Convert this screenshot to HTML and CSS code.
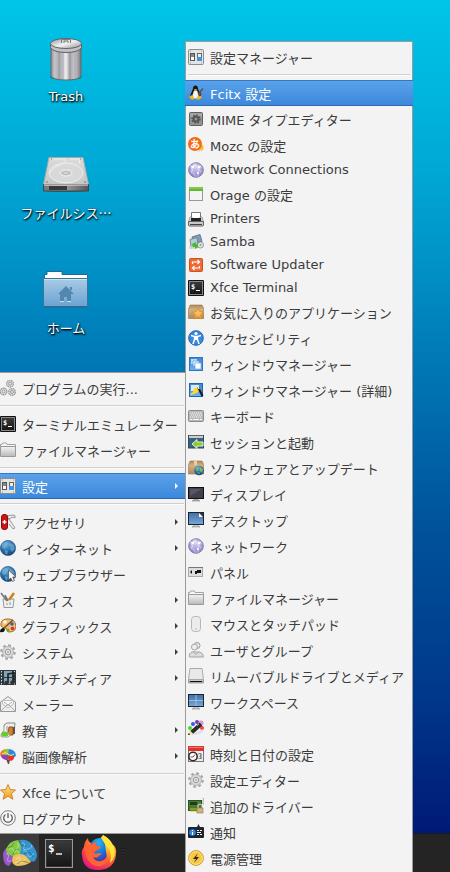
FILE: index.html
```html
<!DOCTYPE html>
<html lang="ja">
<head>
<meta charset="utf-8">
<meta name="viewport" content="width=device-width, initial-scale=1">
<title>デスクトップ</title>
<link rel="stylesheet" href="styles.css">
</head>
<body>
<svg class="sprite" aria-hidden="true">
  <defs>
    <linearGradient id="g-steel" x1="0" x2="1" y1="0" y2="0"><stop offset="0" stop-color="#8f8f96"/><stop offset=".12" stop-color="#c4c4c9"/><stop offset=".3" stop-color="#a8a8ae"/><stop offset=".5" stop-color="#f0f0f2"/><stop offset=".62" stop-color="#a6a6ac"/><stop offset=".8" stop-color="#c9c9ce"/><stop offset="1" stop-color="#77777e"/></linearGradient>
    <linearGradient id="g-lid" x1="0" x2="1" y1="0" y2="1"><stop offset="0" stop-color="#8f9296"/><stop offset=".5" stop-color="#f2f2f3"/><stop offset="1" stop-color="#8e9095"/></linearGradient>
    <linearGradient id="g-drive" x1="0" x2="0" y1="0" y2="1"><stop offset="0" stop-color="#dcdcdc"/><stop offset="1" stop-color="#c6c6c6"/></linearGradient>
    <linearGradient id="g-front" x1="0" x2="1" y1="0" y2="0"><stop offset="0" stop-color="#777"/><stop offset=".5" stop-color="#999"/><stop offset="1" stop-color="#555"/></linearGradient>
    <linearGradient id="g-blue-folder" x1="0" x2="0" y1="0" y2="1"><stop offset="0" stop-color="#a9cbe4"/><stop offset="1" stop-color="#6ba3d2"/></linearGradient>
    <linearGradient id="g-grey" x1="0" x2="0" y1="0" y2="1"><stop offset="0" stop-color="#f4f4f4"/><stop offset="1" stop-color="#b9b9b9"/></linearGradient>
    <linearGradient id="g-dark" x1="0" x2="0" y1="0" y2="1"><stop offset="0" stop-color="#3c3c3c"/><stop offset="1" stop-color="#141414"/></linearGradient>
    <linearGradient id="g-screen" x1="0" x2="0" y1="0" y2="1"><stop offset="0" stop-color="#3f6ea8"/><stop offset="1" stop-color="#79a8d8"/></linearGradient>
    <linearGradient id="g-box" x1="0" x2="0" y1="0" y2="1"><stop offset="0" stop-color="#ae8a5e"/><stop offset=".35" stop-color="#d2b184"/><stop offset="1" stop-color="#ae8858"/></linearGradient>
    <linearGradient id="g-gold" x1="0" x2="0" y1="0" y2="1"><stop offset="0" stop-color="#ffe08a"/><stop offset="1" stop-color="#f39a22"/></linearGradient>
    <linearGradient id="g-wm" x1="0" x2="0" y1="0" y2="1"><stop offset="0" stop-color="#3c86d4"/><stop offset="1" stop-color="#6cb4f2"/></linearGradient>
    <radialGradient id="g-globe" cx=".4" cy=".25" r=".8"><stop offset="0" stop-color="#6bb0e4"/><stop offset=".6" stop-color="#2468a6"/><stop offset="1" stop-color="#123e70"/></radialGradient>
    <radialGradient id="g-net" cx=".5" cy=".3" r=".7"><stop offset="0" stop-color="#d5d1f0"/><stop offset="1" stop-color="#8c84c6"/></radialGradient>
    <radialGradient id="g-fox" cx=".75" cy=".1" r="1"><stop offset="0" stop-color="#fff14a"/><stop offset=".35" stop-color="#ffb02a"/><stop offset=".65" stop-color="#ff5b35"/><stop offset="1" stop-color="#e3167e"/></radialGradient>
    <radialGradient id="g-foxcore" cx=".5" cy=".2" r=".8"><stop offset="0" stop-color="#25b4f4"/><stop offset=".6" stop-color="#1574d8"/><stop offset="1" stop-color="#4a2fb2"/></radialGradient>
  </defs>

  <symbol id="i-toggle" viewBox="0 0 16 16"><rect x=".5" y=".5" width="15" height="15" rx="1" fill="#e4e4e2" stroke="#8d8d8b"/><rect x="2.5" y="4.5" width="4" height="7" fill="#fff" stroke="#555"/><rect x="3" y="5" width="3" height="3" fill="#888"/><rect x="9.500" y="4.500" width="4" height="7" fill="#eee" stroke="#666"/><rect x="9" y="8" width="5" height="4" fill="#4293e2"/><path d="M2 2h1M13 2h1M2 14h1M13 14h1" stroke="#999"/></symbol>
  <symbol id="i-tux" viewBox="0 0 16 16"><path d="M5 3.500Q5 .5 7.500.5T10 4l2 4q2 4-1 5H5Q1 12 3 8.500z" fill="#171717"/><path d="M6 5.500h3.200l1.500 5q.3 3-3.200 3T4.500 10z" fill="#f4f4f4"/><path d="M6 4h3l-1.500 1.700zM1 12l3-2 3 3.500L4 14.800zM9 12l2-2 3 2-2.500 2.500H8.500z" fill="#f8b51e"/><path d="M11.500 7.500l3.500-4M10 9l2-2 1 2-2 2" stroke="#5d4a3a" stroke-width="1.200" fill="#8e4b1f"/></symbol>
  <symbol id="i-mime" viewBox="0 0 16 16"><rect x="1.500" y="1.500" width="13" height="13" rx="1" fill="#949494" stroke="#606060"/><path d="M2 4h12" stroke="#aaa" stroke-width="3"/><circle cx="8" cy="8" r="2.500" fill="none" stroke="#555" stroke-width="2"/><circle cx="8" cy="8" r="4" fill="none" stroke="#555" stroke-width="1.500" stroke-dasharray="1.600 1.500"/></symbol>
  <symbol id="i-network" viewBox="0 0 16 16"><circle cx="8" cy="8" r="7.300" fill="url(#g-net)" stroke="#7871a8" stroke-width=".9"/><path d="M2 5q6-3 12 1M3 3q0 7 5 12M13 3Q9 8 10 15M5 1l8 9M8 1Q5 6 3 11" fill="none" stroke="#f5f3ff" stroke-width=".7" stroke-opacity=".8"/><g fill="#fff"><circle cx="5" cy="5" r="1.200"/><circle cx="11" cy="5" r="1.200"/><circle cx="10" cy="11" r="1"/></g></symbol>
  <symbol id="i-orage" viewBox="0 0 16 16"><rect x="1.500" y="1.500" width="13" height="13" fill="#f3f3f1" stroke="#999"/><path d="M1 1h14v4H1z" fill="#68b530"/><path d="M1 2h14" stroke="#9bdc66"/></symbol>
  <symbol id="i-printer" viewBox="0 0 16 16"><path d="M3.500 9V1.500h9V9" fill="#fff" stroke="#777"/><path d="M2 6h2v4h8V6h2l1.500 5H.5z" fill="#d3d3d3" stroke="#777" stroke-width=".6"/><path d="M3 7h10v3.500H3z" fill="#222"/><path d="M.5 10.500h15V14q0 1-1 1h-13q-1 0-1-1z" fill="#c9c9c9" stroke="#666"/><path d="M2 13.500h12" stroke="#444"/></symbol>
  <symbol id="i-samba" viewBox="0 0 16 16"><path d="M4 3l8-2.500 2 7-8 2z" fill="#739fc2" stroke="#778"/><path d="M2 5.500l7-2 1 7-7 1.500z" fill="#b3ccda" stroke="#788"/><path d="M1 12l8-1 2 3-9 1z" fill="#ccc"/><path d="M4 10l4-2v2l4 2-5 3v-2H5z" fill="#3ec02b"/><circle cx="12.500" cy="11" r="3" fill="#e7e7e7" stroke="#777" stroke-width=".7"/><circle cx="12.500" cy="11" r="1" fill="#66b95a"/></symbol>
  <symbol id="i-updater" viewBox="0 0 16 16"><rect x="1.500" y="1.500" width="13" height="13" rx="1" fill="#ee6a32" stroke="#d0501f"/><path d="M4.500 7V5h6M11.500 9v2h-6M9.500 3l2 2-2 2M6.500 9l-2 2 2 2" fill="none" stroke="#fff" stroke-width="1.200"/></symbol>
  <symbol id="i-favorite" viewBox="0 0 16 16"><path d="M2 1h12l2 4v9.500H.5V5z" fill="url(#g-box)" stroke="#9a7648" stroke-width=".6"/><path d="M10 4.500l1.600 3.300 3.900.4-2.800 2.600.8 4.200-3.500-2-3.500 2 .8-4.200-2.800-2.600 3.900-.4z" fill="url(#g-gold)" stroke="#df861c" stroke-width=".8"/></symbol>
  <symbol id="i-access" viewBox="0 0 16 16"><circle cx="8" cy="8" r="7.300" fill="#3689dc" stroke="#1f65ad"/><circle cx="8" cy="3.500" r="1.600" fill="#fff"/><path d="M3 5.500l3.500 1v3L5 14M13 5.500l-3.500 1v3L11 14M6.500 6.500h3" stroke="#fff" stroke-width="1.500" fill="none"/><path d="M6.500 6h3v4h-3z" fill="#fff"/></symbol>
  <symbol id="i-wm" viewBox="0 0 16 16"><rect x="1.500" y="1.500" width="13" height="13" fill="url(#g-wm)" stroke="#2f74bf"/><path d="M3 3h6v5H3z" fill="#b9d8f5"/><path d="M5 5h6v5H5z" fill="#dcecfb" stroke="#5a9bdc" stroke-width=".6"/><path d="M7 7h6v6H7z" fill="#fff" stroke="#5a9bdc" stroke-width=".6"/></symbol>
  <symbol id="i-wmtweak" viewBox="0 0 16 16"><rect x="1.500" y="1.500" width="13" height="13" fill="url(#g-wm)" stroke="#2463ad"/><path d="M3 3h8v6H3z" fill="#d8eafa"/><path d="M2 12l3-2 1-3q2-3 4 0l1-3 1 4-3 3-6 2z" fill="#fbd92d"/><path d="M10 5l4.500 9" stroke="#202020" stroke-width="2.200"/><path d="M9.500 4l1.500 3" stroke="#eee" stroke-width="1.500"/></symbol>
  <symbol id="i-keyboard" viewBox="0 0 16 16"><rect x=".5" y="2.500" width="15" height="11" rx="1" fill="#b9b9b9" stroke="#8b8b8b"/><path d="M2 5h12M3 7h11M2 9h12" stroke="#f6f6f6" stroke-width="1.200" stroke-dasharray="1.200 .8"/><path d="M2 11.500h2M5 11.500h6M12 11.500h2" stroke="#f6f6f6"/></symbol>
  <symbol id="i-session" viewBox="0 0 16 16"><rect x=".5" y="1.500" width="15" height="12.500" fill="#356386" stroke="#344756"/><path d="M1 1h14v3H1z" fill="#ccc"/><path d="M1 1.500h14" stroke="#666"/><path d="M4 10l5-4.500V8h6v4H9v2.500z" fill="#8cc735" stroke="#e5f4c9"/></symbol>
  <symbol id="i-software" viewBox="0 0 16 16"><path d="M2 1h12l2 4v9H.5V5z" fill="url(#g-box)" stroke="#9a7648" stroke-width=".6"/><path d="M6 1h3v4H6z" fill="#e6cfa4"/><circle cx="11" cy="10.500" r="4.800" fill="url(#g-globe)"/><path d="M8 8q2-2 3 0l-1 2-2 1zM12 7l3 2-1 4-2-2zM9 13l2-1 1 2z" fill="#83ba49"/></symbol>
  <symbol id="i-display" viewBox="0 0 16 16"><path d="M6 12h4v2l2 1H4l2-1z" fill="#aaa" stroke="#777" stroke-width=".5"/><rect x=".5" y="1.500" width="15" height="11" fill="#40404b" stroke="#101010"/><path d="M2 3h12L2 10z" fill="#575561"/></symbol>
  <symbol id="i-desktop" viewBox="0 0 16 16"><path d="M6 12h4v2l2 1H4l2-1z" fill="#ccc" stroke="#777" stroke-width=".5"/><rect x=".5" y=".5" width="15" height="12" fill="url(#g-screen)" stroke="#1b2530"/><path d="M11 1h4v5z" fill="#333"/><path d="M11 1v4h4z" fill="#fff"/></symbol>
  <symbol id="i-panel" viewBox="0 0 16 16"><rect x=".5" y="3.500" width="14" height="9" fill="#ddd" stroke="#aaa"/><path d="M1 3.500h14" stroke="#777"/><path d="M2 8l2-2v4zM7 7h2V6h4v3H9v1H7z" fill="#111"/></symbol>
  <symbol id="i-folder" viewBox="0 0 16 16"><path d="M.5 14V2.500H2L2.500 1h4L7 2.500h8.500V14z" fill="#f7f7f7" stroke="#a3a3a3"/><path d="M.5 4.500h15V14q0 .5-.5.500H1q-.5 0-.5-.5z" fill="url(#g-grey)" stroke="#999"/></symbol>
  <symbol id="i-mouse" viewBox="0 0 16 16"><rect x="3.500" y=".5" width="9" height="15" rx="3" fill="#ececec" stroke="#b7b7b7"/><circle cx="8" cy="13" r=".8" fill="#bbb"/></symbol>
  <symbol id="i-users" viewBox="0 0 16 16"><circle cx="9" cy="3.500" r="3" fill="#eee" stroke="#999"/><path d="M1.500 15q-1-4 3-5 2-.5 4 0t3 0q4 1 4 5z" fill="#ddd" stroke="#a3a3a3"/><circle cx="6.500" cy="5" r="3" fill="#eee" stroke="#a3a3a3"/><path d="M5 9.500l3 3 3-3" fill="none" stroke="#aaa"/></symbol>
  <symbol id="i-removable" viewBox="0 0 16 16"><path d="M2 .5h12l1.500 11v3.500H.5v-3.500z" fill="#e9e9e9" stroke="#aaa"/><path d="M1 11.500h14v3H1z" fill="#ccc" stroke="#888" stroke-width=".6"/><path d="M2 13.500h12" stroke="#111"/></symbol>
  <symbol id="i-workspace" viewBox="0 0 16 16"><path d="M6 12h4v2l2 1H4l2-1z" fill="#ccc" stroke="#777" stroke-width=".5"/><rect x=".5" y=".5" width="15" height="12" fill="url(#g-screen)" stroke="#1b2530"/><path d="M8 1v11M1 6.500h14" stroke="#b7d2eb" stroke-opacity=".7"/></symbol>
  <symbol id="i-look" viewBox="0 0 16 16"><circle cx="5" cy="4" r="2" fill="#315ce7"/><circle cx="9" cy="2" r="2" fill="#7d39a4"/><circle cx="13" cy="3" r="2.500" fill="#d49ada"/><circle cx="2" cy="8" r="2" fill="#48d82f"/><circle cx="14" cy="8" r="2" fill="#f14343"/><path d="M6 14q6-1 9-4" stroke="#ddd" stroke-width="2" fill="none"/><path d="M3 13L13 4" stroke="#2b2b2b" stroke-width="4"/><path d="M0 15l1.500-5 4 4z" fill="#f3e598"/><path d="M0 15l.8-2 1.400 1.400z" fill="#111"/><path d="M9 6l2-2" stroke="#999"/></symbol>
  <symbol id="i-gear" viewBox="0 0 16 16"><circle cx="8" cy="8" r="6.700" fill="none" stroke="#a5a5a5" stroke-width="2.200" stroke-dasharray="2.700 2.560"/><circle cx="8" cy="8" r="5.500" fill="#d8d8d8" stroke="#aaa" stroke-width=".8"/><circle cx="8" cy="8" r="2.700" fill="#eee" stroke="#999"/><circle cx="8" cy="8" r="1.300" fill="#bbb"/></symbol>
  <symbol id="i-driver" viewBox="0 0 16 16"><rect x=".5" y="2.500" width="13" height="10" fill="#447c31" stroke="#2c5123"/><path d="M2 4h7v3H2z" fill="#26391f"/><path d="M3 10v4M5 10v4M7 10v4M9 10v4" stroke="#c9bd20"/><path d="M14 0h2v2h-1v4h1" fill="none" stroke="#aaa"/><path d="M10 10V7q2-2 4 0v3" fill="none" stroke="#ddd"/><rect x="9" y="10" width="6" height="5" fill="#cdb77b" stroke="#8d7644" stroke-width=".6"/></symbol>
  <symbol id="i-notify" viewBox="0 0 16 16"><path d="M9 3l1.500-3L12 3h3q1 0 1 1v9q0 1-1 1H1q-1 0-1-1V4q0-1 1-1z" fill="#20242b"/><circle cx="4.500" cy="8.500" r="3.300" fill="#2d8be4"/><path d="M4.500 6v1M4.500 8v3" stroke="#fff"/><path d="M9 6.500h2M12 6.500h2M9 8.500h4M9 10.500h2M12 10.500h2" stroke="#eee"/></symbol>
  <symbol id="i-power" viewBox="0 0 16 16"><circle cx="8" cy="8" r="7.400" fill="#f8c63f" stroke="#cb9a30"/><circle cx="8" cy="8" r="6.300" fill="none" stroke="#ffe48c"/><path d="M10 3L5 9h3l-2 4 5-6H8z" fill="#2b2b2b"/></symbol>

  <symbol id="i-run" viewBox="0 0 16 16"><g fill="#e8e8e8" stroke="#999"><circle cx="10" cy="3.700" r="3.300" stroke-width="1.400" stroke-dasharray="1.500 .5"/><circle cx="3.500" cy="11.500" r="3.300" stroke-width="1.400" stroke-dasharray="1.500 .5"/><circle cx="12" cy="12" r="3.300" stroke-width="1.400" stroke-dasharray="1.500 .5"/><circle cx="10" cy="3.700" r="1.500"/><circle cx="3.500" cy="11.500" r="1.500"/><circle cx="12" cy="12" r="1.500"/></g></symbol>
  <symbol id="i-knife" viewBox="0 0 16 16"><path d="M7 2l6-1q3 0 2 3l-2-1-4 2 6 9-2 1-4-5" fill="#eee" stroke="#999"/><path d="M7 1l2 4-2 2z" fill="#777"/><rect x="1.500" y=".5" width="6" height="15" rx="2.500" fill="#ce1515" stroke="#8e0b0b"/><path d="M4.500 6v4M2.500 8h4" stroke="#fff" stroke-width="1.400"/></symbol>
  <symbol id="i-globe" viewBox="0 0 16 16"><circle cx="8" cy="8" r="7.600" fill="url(#g-globe)" stroke="#184672" stroke-width=".6"/><path d="M2 4l4-2 3 1-2 2-1 3-2 1-2-2zM10 3l4 2 1 4-3 3-2-3 1-2-2-2zM5 10l3 1-1 4-2-2z" fill="#76b9cf" opacity=".6"/></symbol>
  <symbol id="i-web" viewBox="0 0 16 16"><use href="#i-globe"/><path d="M8.500 4v10l2.300-2 1.700 3.500 2-1-1.700-3.500H16z" fill="#f5f5f5" stroke="#555" stroke-width=".8"/></symbol>
  <symbol id="i-office" viewBox="0 0 16 16"><path d="M3 7h11l-1 8.500H4z" fill="#f0f0f0" stroke="#999"/><path d="M1 1l6 8M5 3l3 6" stroke="#777" stroke-width="1.600"/><path d="M14 1L9 8" stroke="#c58525" stroke-width="2.500"/><path d="M6 11h2v2H6z" fill="#efb1a8"/><path d="M9 10h2v3H9z" fill="#9bcbe6"/></symbol>
  <symbol id="i-graphics" viewBox="0 0 16 16"><path d="M1 8Q0 2 6 1q9-1 10 7 0 6-7 6-2 0-2-2t-2-2-4-2z" fill="#f0bd77" stroke="#a66d1f"/><circle cx="5" cy="4" r="1.800" fill="#fff5df"/><circle cx="12" cy="6" r="1.800" fill="#305ed0"/><circle cx="12.500" cy="10.500" r="1.800" fill="#d6342c"/><circle cx="8" cy="12" r="1.500" fill="#57ad30"/><path d="M3 11l10-9" stroke="#76532b" stroke-width="1.600"/><path d="M0 14q0-4 4-4l1 2q-1 3-5 2z" fill="#111"/></symbol>
  <symbol id="i-media" viewBox="0 0 16 16"><rect width="16" height="15" fill="#2c373f"/><path d="M4 1h8v6H4zM4 8h8v6H4z" fill="#83a5b8"/><path d="M1.500 1v14M14.500 1v14" stroke="#ddd" stroke-dasharray="1.500 1.500"/><path d="M8 13V4l6-1v9" fill="none" stroke="#222" stroke-width="1.600"/><circle cx="6.500" cy="13" r="2.300" fill="#333"/><circle cx="12.500" cy="12.500" r="2.300" fill="#333"/></symbol>
  <symbol id="i-mail" viewBox="0 0 16 16"><path d="M.5 6L8 .5 15.500 6v9.500H.5z" fill="#eee" stroke="#999"/><path d="M2.500 8V4.500h11V8L8 12z" fill="#fafafa" stroke="#bbb"/><path d="M1 15l6-6h2l6 6M4 6l4 3 4-3" fill="none" stroke="#aaa"/></symbol>
  <symbol id="i-edu" viewBox="0 0 16 16"><path d="M4 3l3-2h8l-1 10-8 1z" fill="#eee" stroke="#888"/><path d="M9 5h4v8H8z" fill="#e67a28" stroke="#8c542b"/><path d="M13 5h2v7h-2z" fill="#555"/><path d="M4 4v4l-3 5q-1 2 2 2h5q3-1 1-3L7 8V4" fill="#f1f8ec" stroke="#999"/><ellipse cx="5" cy="12" rx="3.700" ry="2.500" fill="#69cb29"/></symbol>
  <symbol id="i-brain" viewBox="0 0 36 32"><path d="M1 17q2-8 7-5l5 8-6 9q-6 0-6-12z" fill="#9a55cb"/><path d="M4 12q3-8 12-9l4 6-2 11-7-1-6-2z" fill="#85c943"/><path d="M17 3q11-2 16 9 4 6 0 12-5 2-9-4l-6-3 1-7z" fill="#3295cf"/><path d="M11 19q7-4 13 0l5 6q-5 4-14 4-7-2-4-10z" fill="#edc15d"/><g fill="none" stroke="#fff" stroke-opacity=".4"><path d="M7 13q3-4 4 0t4-1 0-6M12 16q3-5 5 0M20 6q4 0 2 4t4 2 3-4M21 14q4-1 5 4t6-2M14 22q4-4 4 1t5-1M13 26q5-3 8 0M4 17q4 0 2 4t3 3"/></g><g fill="none" stroke="#173e43" stroke-opacity=".4"><path d="M6 11q5-1 6-5M11 18q0-5 6-6M18 4q0 6 6 5M22 17q6-4 9 3M15 27q4-5 12-1"/></g></symbol>
  <symbol id="i-brain-small" viewBox="0 0 16 16"><path d="M0 7q0-5 6-6l2 6-6 2z" fill="#ea7b2a"/><path d="M4 2q5-3 7 1l-2 5-5-1z" fill="#8ccb39"/><path d="M9 1q7 1 7 7l-5 3-3-4z" fill="#3187df"/><path d="M1 7h7l2 4-4 1q-5-1-5-5z" fill="#9a3ac7"/><path d="M8 8h6q1 3-3 5l-3-2z" fill="#e6342c"/><path d="M6 11l4 1-1 4H8z" fill="#6c4b27"/><path d="M2 6q3-3 6 0t6 0" stroke="#ffe56b" fill="none"/></symbol>
  <symbol id="i-star" viewBox="0 0 16 16"><path d="M8 .5l2.200 5 5.300.5-4 3.500 1.300 5.800L8 12.200l-4.800 3.100 1.300-5.800L.5 6l5.300-.5z" fill="url(#g-gold)" stroke="#c8801d" stroke-width=".9"/></symbol>
  <symbol id="i-logout" viewBox="0 0 16 16"><circle cx="8" cy="8" r="7.300" fill="#f8f8f8" stroke="#7b7b7b"/><path d="M5.500 4.500a4.300 4.300 0 1 0 5 0M8 3v5" fill="none" stroke="#666" stroke-width="1.400"/></symbol>
</svg>

<div class="screen">
  <main class="desktop">
    <a class="launcher" href="#trash">
      <svg class="launcher-icon" viewBox="0 0 48 48" aria-hidden="true"><ellipse cx="24" cy="42" rx="16" ry="3" opacity=".25"/><path d="M9 11v30q2 4 15 4t15-4V11z" fill="url(#g-steel)" stroke="#66676b"/><path d="M17 14v29M21 14v30M28 14v30M33 14v29" stroke="#85868b" stroke-opacity=".5"/><path d="M8.500 8.500v4q3 5 15.500 5t15.500-5v-4z" fill="#bfc1c4" stroke="#606266"/><ellipse cx="24" cy="8.500" rx="15.500" ry="5" fill="url(#g-lid)" stroke="#606266"/><path d="M19.500 8V4.500h9V8M22 8V6h4v2" fill="none" stroke="#7b7d81"/></svg>
      <span class="launcher-label">Trash</span>
    </a>
    <a class="launcher" href="#filesystem">
      <svg class="launcher-icon" viewBox="0 0 48 48" aria-hidden="true"><ellipse cx="24" cy="40" rx="23" ry="2" opacity=".3"/><path d="M7 7.500h34l5.500 27h-45z" fill="url(#g-drive)" stroke="#aaa"/><path d="M1.500 34.500h45V41h-45z" fill="url(#g-front)" stroke="#444"/><path d="M7 36h18v4H7z" fill="#3a3a3a"/><path d="M2 35h44" stroke="#eee"/><ellipse cx="24" cy="23" rx="17" ry="10" fill="#d8d8d8" stroke="#eee"/><path d="M12 9h12q-1 5-9 7-6 3-7 7M28 9h9l1 5" fill="none" stroke="#eee"/><ellipse cx="24" cy="23" rx="6" ry="3" fill="#c6c6c6" stroke="#f5f5f5"/><ellipse cx="24" cy="23" rx="3.500" ry="1.600" fill="#d2d2d2" stroke="#bbb"/><path d="M4 32h2M42 32h2M9 9h1M38 9h1" stroke="#777"/></svg>
      <span class="launcher-label kana">ファイルシス…</span>
    </a>
    <a class="launcher" href="#home">
      <svg class="launcher-icon" viewBox="0 0 48 48" aria-hidden="true"><path d="M2.500 14V9.500H5v-3h15v3h25.500V14z" fill="#fff" stroke="#1b6d98"/><path d="M1.500 13.500h44v28h-44z" fill="url(#g-blue-folder)" stroke="#38759b"/><path d="M2 42h43" stroke="#315f83"/><path d="M2 14.500h43" stroke="#d1e2ef"/><path d="M24 21l8 8h-3v7h-4v-4h-3v4h-4v-7h-2zM28 22h2v3h-2z" fill="#5287b0"/><path d="M18 36.500h4M25 36.500h4" stroke="#cfe1ef"/></svg>
      <span class="launcher-label kana">ホーム</span>
    </a>
  </main>

  <footer class="taskbar">
    <button class="task active" type="button" aria-label="アプリケーションメニュー"><svg class="task-brain" aria-hidden="true"><use href="#i-brain"/></svg></button>
    <button class="task" type="button" aria-label="ターミナル"><svg class="task-terminal" viewBox="0 0 28 29" aria-hidden="true"><rect x=".5" y=".5" width="27" height="28" fill="url(#g-dark)" stroke="#999"/><rect x="1.500" y="1.500" width="25" height="26" fill="none" stroke="#333"/><text x="3" y="13" class="glyph-prompt-large">$</text><path d="M11 15h6" stroke="#eee" stroke-width="1.500"/></svg></button>
    <button class="task" type="button" aria-label="Firefox"><svg class="task-firefox" viewBox="0 0 36 36" aria-hidden="true"><path d="M3 12q0-5 4-9 0 4 3 5 3-2 8-3l4-5q6 3 9 9 5 3 4 10-1 15-17 16T1 20q-1-5 2-8z" fill="url(#g-fox)"/><path d="M10 8q3-5 10-5l4 6 2 14q-3 5-9 4-7-2-8-10z" fill="url(#g-foxcore)"/><path d="M3 12q4-3 7-2 2-3 6-3-2 3 0 4 3 0 4 1-1 2-4 3-2 1-3 3 2 1 4 0 3 0 4 1-3 1-4 3-3 1-5 0 2 5 8 4 5-1 6-6 2 8-6 11-14 2-17-19z" fill="#ff6330"/><path d="M22 0q9 5 11 13 3 9-4 15 2-9-1-14-6-6-6-14z" fill="#ffe43c"/></svg></button>
    <span class="grip" aria-hidden="true"></span>
  </footer>

  <nav class="menu app-menu" aria-label="アプリケーション">
    <button class="item" type="button"><svg class="icon"><use href="#i-run"/></svg>プログラムの実行...</button>
    <hr>
    <button class="item" type="button"><svg class="icon" viewBox="0 0 16 16"><rect width="16" height="16" rx="1" fill="#111"/><rect x="1.500" y="1.500" width="13" height="13" fill="url(#g-dark)" stroke="#888"/><text x="3" y="9" class="glyph-prompt">$</text><path d="M8 10.500h4" stroke="#fff"/></svg>ターミナルエミュレーター</button>
    <button class="item" type="button"><svg class="icon"><use href="#i-folder"/></svg>ファイルマネージャー</button>
    <hr>
    <button class="item parent selected" type="button"><svg class="icon"><use href="#i-toggle"/></svg>設定</button>
    <hr>
    <button class="item parent" type="button"><svg class="icon"><use href="#i-knife"/></svg>アクセサリ</button>
    <button class="item parent" type="button"><svg class="icon"><use href="#i-globe"/></svg>インターネット</button>
    <button class="item" type="button"><svg class="icon"><use href="#i-web"/></svg>ウェブブラウザー</button>
    <button class="item parent" type="button"><svg class="icon"><use href="#i-office"/></svg>オフィス</button>
    <button class="item parent" type="button"><svg class="icon"><use href="#i-graphics"/></svg>グラフィックス</button>
    <button class="item parent" type="button"><svg class="icon"><use href="#i-gear"/></svg>システム</button>
    <button class="item parent" type="button"><svg class="icon"><use href="#i-media"/></svg>マルチメディア</button>
    <button class="item" type="button"><svg class="icon"><use href="#i-mail"/></svg>メーラー</button>
    <button class="item parent" type="button"><svg class="icon"><use href="#i-edu"/></svg>教育</button>
    <button class="item parent" type="button"><svg class="icon"><use href="#i-brain-small"/></svg>脳画像解析</button>
    <hr>
    <button class="item" type="button"><svg class="icon"><use href="#i-star"/></svg>Xfce について</button>
    <button class="item" type="button"><svg class="icon"><use href="#i-logout"/></svg>ログアウト</button>
  </nav>

  <nav class="menu settings-menu" aria-label="設定">
    <button class="item" type="button"><svg class="icon"><use href="#i-toggle"/></svg>設定マネージャー</button>
    <hr>
    <button class="item selected" type="button"><svg class="icon"><use href="#i-tux"/></svg>Fcitx 設定</button>
    <button class="item" type="button"><svg class="icon"><use href="#i-mime"/></svg>MIME タイプエディター</button>
    <button class="item" type="button"><svg class="icon" viewBox="0 0 16 16"><path d="M10 10l5-2q1 3 0 5-2 2-5 0z" fill="#ffbd1c"/><circle cx="7" cy="7" r="7" fill="#f36b14"/><path d="M9 13q3 1 4-1l1 2-4 1z" fill="#ddd"/><text x="2" y="11" class="glyph-kana">あ</text></svg>Mozc の設定</button>
    <button class="item latin" type="button"><svg class="icon"><use href="#i-network"/></svg>Network Connections</button>
    <button class="item" type="button"><svg class="icon"><use href="#i-orage"/></svg>Orage の設定</button>
    <button class="item latin" type="button"><svg class="icon"><use href="#i-printer"/></svg>Printers</button>
    <button class="item latin" type="button"><svg class="icon"><use href="#i-samba"/></svg>Samba</button>
    <button class="item latin" type="button"><svg class="icon"><use href="#i-updater"/></svg>Software Updater</button>
    <button class="item latin" type="button"><svg class="icon" viewBox="0 0 16 16"><rect width="16" height="16" rx="1" fill="#111"/><rect x="1.500" y="1.500" width="13" height="13" fill="url(#g-dark)" stroke="#888"/><text x="3" y="9" class="glyph-prompt">$</text><path d="M8 10.500h4" stroke="#fff"/></svg>Xfce Terminal</button>
    <button class="item" type="button"><svg class="icon"><use href="#i-favorite"/></svg>お気に入りのアプリケーション</button>
    <button class="item" type="button"><svg class="icon"><use href="#i-access"/></svg>アクセシビリティ</button>
    <button class="item" type="button"><svg class="icon"><use href="#i-wm"/></svg>ウィンドウマネージャー</button>
    <button class="item" type="button"><svg class="icon"><use href="#i-wmtweak"/></svg>ウィンドウマネージャー (詳細)</button>
    <button class="item" type="button"><svg class="icon"><use href="#i-keyboard"/></svg>キーボード</button>
    <button class="item" type="button"><svg class="icon"><use href="#i-session"/></svg>セッションと起動</button>
    <button class="item" type="button"><svg class="icon"><use href="#i-software"/></svg>ソフトウェアとアップデート</button>
    <button class="item" type="button"><svg class="icon"><use href="#i-display"/></svg>ディスプレイ</button>
    <button class="item" type="button"><svg class="icon"><use href="#i-desktop"/></svg>デスクトップ</button>
    <button class="item" type="button"><svg class="icon"><use href="#i-network"/></svg>ネットワーク</button>
    <button class="item" type="button"><svg class="icon"><use href="#i-panel"/></svg>パネル</button>
    <button class="item" type="button"><svg class="icon"><use href="#i-folder"/></svg>ファイルマネージャー</button>
    <button class="item" type="button"><svg class="icon"><use href="#i-mouse"/></svg>マウスとタッチパッド</button>
    <button class="item" type="button"><svg class="icon"><use href="#i-users"/></svg>ユーザとグループ</button>
    <button class="item" type="button"><svg class="icon"><use href="#i-removable"/></svg>リムーバブルドライブとメディア</button>
    <button class="item" type="button"><svg class="icon"><use href="#i-workspace"/></svg>ワークスペース</button>
    <button class="item" type="button"><svg class="icon"><use href="#i-look"/></svg>外観</button>
    <button class="item" type="button"><svg class="icon" viewBox="0 0 16 16"><rect x=".5" y=".5" width="15" height="15" fill="#eee" stroke="#777"/><path d="M0 0h16v5H0z" fill="#d9342e"/><path d="M1 1.500h14" stroke="#f47a70"/><text x="10" y="13" class="glyph-date">3</text><circle cx="5" cy="10.500" r="4.200" fill="#fff" stroke="#2e2e2e" stroke-width="1.600"/><path d="M2.500 11H5l2-2.500" stroke="#c33" fill="none"/></svg>時刻と日付の設定</button>
    <button class="item" type="button"><svg class="icon"><use href="#i-gear"/></svg>設定エディター</button>
    <button class="item" type="button"><svg class="icon"><use href="#i-driver"/></svg>追加のドライバー</button>
    <button class="item" type="button"><svg class="icon"><use href="#i-notify"/></svg>通知</button>
    <button class="item" type="button"><svg class="icon"><use href="#i-power"/></svg>電源管理</button>
  </nav>
</div>
</body>
</html>
```
FILE: styles.css
```css
* {
  box-sizing: border-box;
}

body {
  margin: 0;
  color: #3c3c3c;
  font-family: "DejaVu Sans", "Noto Sans CJK JP", sans-serif;
  font-size: 13px;
}

.sprite {
  position: absolute;
  width: 0;
  height: 0;
}

.screen {
  position: relative;
  display: flex;
  flex-direction: column;
  height: 100vh;
  overflow: hidden;
}

/* Desktop */

.desktop {
  flex: 1;
  display: flex;
  flex-direction: column;
  align-items: flex-start;
  padding: 35px 9px 0;
  background: linear-gradient(#00c5e8 0%, #00a9d5 20%, #008fc5 33%, #0077b5 44%, #00519a 64%, #00378a 84%, #001977 100%);
}

.launcher {
  display: flex;
  flex-direction: column;
  align-items: center;
  gap: 4px;
  width: 114px;
  height: 115px;
  color: #fff;
  text-decoration: none;
}

.launcher-icon {
  width: 48px;
  height: 48px;
}

.launcher-label {
  line-height: 20px;
  text-shadow: 1px 1px 2px #000, 0 1px 2px #000;
}

.launcher-label.kana {
  font-family: "Noto Sans CJK JP", sans-serif;
  line-height: 22px;
}

/* Panel */

.taskbar {
  display: flex;
  height: 39px;
  border-top: 1px solid #1a1a1a;
  background: #242424;
}

.task {
  display: flex;
  align-items: center;
  justify-content: center;
  width: 40px;
  padding: 0;
  border: 0;
  background: none;
}

.task.active {
  width: 39px;
  background: #3b3b3b;
}

.task-brain {
  width: 36px;
  height: 32px;
}

.task-terminal {
  width: 28px;
  height: 29px;
}

.task-firefox {
  width: 36px;
  height: 36px;
}

.grip {
  width: 4px;
  height: 8px;
  margin: 14px 2px;
  background: repeating-linear-gradient(#1a1a1a 0 1px, #2b2b2b 1px 3px);
}

/* Menus */

.menu {
  position: absolute;
  display: flex;
  flex-direction: column;
  border: 1px solid #9b9b9b;
  background: #f3f3f3;
}

.app-menu {
  left: 0;
  bottom: 38px;
  width: 186px;
  padding: 2px 0;
  border-left: 0;
}

.settings-menu {
  left: 185px;
  top: 41px;
  width: 228px;
  padding: 2px 0;
}

.menu hr {
  flex: none;
  height: 2px;
  margin: 4px 2px;
  border: 0;
  border-top: 1px solid #cfcfcf;
  background: #fbfbfb;
}

.app-menu hr {
  margin-left: 0;
  margin-right: 1px;
}

.item {
  flex: none;
  display: flex;
  align-items: center;
  gap: 6px;
  height: 26px;
  padding: 0 7px 0 2px;
  border: 0;
  background: none;
  color: inherit;
  font: inherit;
  text-align: left;
  white-space: nowrap;
}

.app-menu .item {
  padding-left: 0;
}

.item.latin {
  height: 23px;
}

.item.selected {
  background: linear-gradient(#5ba3ea, #3b87da);
  box-shadow: inset 0 1px #3479c8, inset 0 -1px #2d68b0;
  color: #fff;
}

.settings-menu .item.selected {
  margin: 0 -1px;
  padding-left: 3px;
}

.icon {
  flex: none;
  width: 16px;
  height: 16px;
}

.item.parent::after {
  content: "";
  margin-left: auto;
  border: 3px solid transparent;
  border-left-color: currentColor;
  border-right: 0;
}

/* Characters inside icons */

.glyph-kana {
  fill: #fff;
  font: bold 10px "Noto Sans CJK JP", sans-serif;
}

.glyph-prompt {
  fill: #fff;
  font: bold 7px "DejaVu Sans Mono", monospace;
}

.glyph-prompt-large {
  fill: #fff;
  font: bold 11px "DejaVu Sans Mono", monospace;
}

.glyph-date {
  fill: #555;
  font: bold 8px "Liberation Serif", serif;
}
```
